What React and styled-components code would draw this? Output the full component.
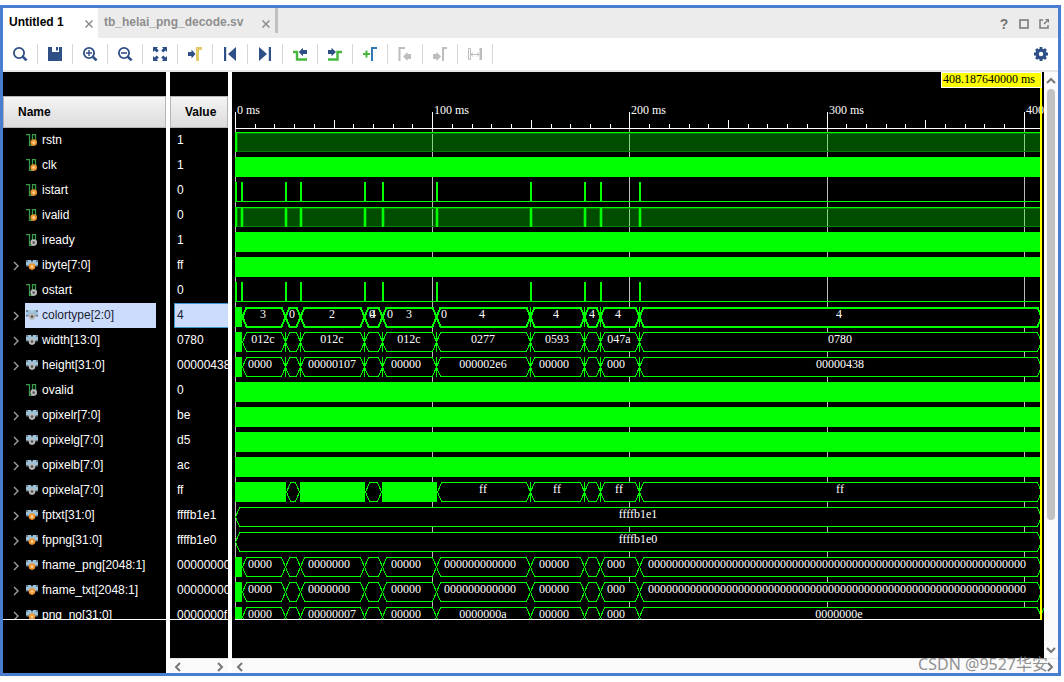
import React from "react";
import styled, { createGlobalStyle, css } from "styled-components";

const GlobalStyle = createGlobalStyle`
  *, *::before, *::after { box-sizing: border-box; }
  body {
    margin: 0;
    background: #fff;
    font-family: "Liberation Sans", Arial, sans-serif;
    font-size: 12px;
  }
  button { font: inherit; }
`;

const NAVY = "#2f4f87";
const GREEN = "#00ff00";
const TOOL_GREEN = "#44b73c";
const MUTED = "#bdbdbd";

/* ---------- frame ---------- */

const Frame = styled.div`
  display: flex;
  flex-direction: column;
  min-height: calc(100vh - 11px);
  margin: 5px 3px 6px 0;
  border: 3px solid #4a7dcf;
  background: #fff;
`;

const bareButton = css`
  display: flex;
  align-items: center;
  justify-content: center;
  padding: 0;
  border: 0;
  background: none;
  cursor: pointer;
`;

const TabBar = styled.div`
  display: flex;
  height: 30px;
  background: #ececec;
`;

const Tab = styled.div`
  display: flex;
  align-items: center;
  justify-content: space-between;
  width: ${(p) => p.$width}px;
  padding: 0 4px 2px 6px;
  background: ${(p) => (p.$active ? "#fff" : "transparent")};
`;

const TabLabel = styled.button`
  ${bareButton}
  font-weight: bold;
  color: ${(p) => (p.$active ? "#000" : "#8e8e8e")};
`;

const CloseButton = styled.button`
  ${bareButton}
  align-self: flex-end;
  width: 10px;
  height: 24px;
`;

const TabDivider = styled.div`
  width: 3px;
  height: 25px;
  background: #c0c0c0;
`;

const WindowActions = styled.div`
  display: flex;
  align-items: center;
  gap: 8px;
  margin-left: auto;
  padding: 2px 8px 0 0;
`;

const WindowButton = styled.button`
  ${bareButton}
  width: 12px;
  height: 16px;
  font-size: 14px;
  font-weight: bold;
  color: #757575;
`;

const Toolbar = styled.div`
  display: flex;
  align-items: center;
  height: 34px;
  border-bottom: 2px solid #e6e6e6;
`;

const ToolButton = styled.button`
  ${bareButton}
  width: 35px;
  height: 20px;
  border-right: 1px solid #d6d6d6;
`;

const SettingsButton = styled.button`
  ${bareButton}
  width: 34px;
  height: 20px;
  margin-left: auto;
`;

const Main = styled.div`
  display: flex;
  flex: 1;
`;

/* ---------- signal table ---------- */

const SignalPane = styled.div`
  display: flex;
  flex-direction: column;
  width: 225px;
  flex: none;
  padding-top: 24px;
  background: linear-gradient(to right, #000 163px, #fff 163px, #fff 167px, #000 167px);
`;

const SignalClip = styled.div`
  height: 524px;
  overflow: hidden;
  border-bottom: 1px solid #fff;
`;

const SignalTable = styled.table`
  width: 100%;
  table-layout: fixed;
  border-collapse: collapse;
  color: #fff;
`;

const HeadCell = styled.th`
  width: ${(p) => p.$width}px;
  padding: 0 ${(p) => (p.$gap ? 4 : 0)}px 0 0;
  text-align: left;
`;

const HeadLabel = styled.div`
  height: 32px;
  padding-left: 14px;
  border: 1px solid #b5b5b5;
  background: linear-gradient(#f4f4f4, #dcdcdc);
  line-height: 30px;
  color: #000;
`;

const BodyCell = styled.td`
  height: 25px;
  padding: 0 0 0 ${(p) => (p.$value ? 4 : 5)}px;
`;

const NameLine = styled.div`
  display: flex;
  align-items: center;
  height: 25px;
`;

const Expander = styled.button`
  ${bareButton}
  width: 17px;
  height: 25px;
  padding-right: 2px;
`;

const ExpanderSpace = styled.span`
  width: 17px;
`;

const NameLabel = styled.span`
  display: flex;
  align-items: center;
  gap: 4px;
  width: 131px;
  height: 25px;
  padding: 0 0 2px 1px;
  background: ${(p) => (p.$selected ? "#cbdcfd" : "transparent")};
  color: ${(p) => (p.$selected ? "#1b2130" : "#fff")};
`;

const ValueLabel = styled.div`
  height: 25px;
  padding-left: 2px;
  overflow: hidden;
  white-space: nowrap;
  line-height: 23px;
  border: 1px solid ${(p) => (p.$selected ? "#3f95cf" : "transparent")};
  border-right: 0;
  background: ${(p) => (p.$selected ? "#cbdcfd" : "transparent")};
  color: ${(p) => (p.$selected ? "#1b2130" : "#fff")};
`;

const SideFooter = styled.div`
  margin-top: auto;
  padding-left: 167px;
`;

/* ---------- scroll bars ---------- */

const HScroll = styled.div`
  display: flex;
  align-items: flex-end;
  justify-content: space-between;
  height: 15px;
  border-top: 1px solid #e6e6e6;
  background: #fafafa;
`;

const VScroll = styled.div`
  display: flex;
  flex-direction: column;
  align-items: center;
  width: 14px;
  background: #fafafa;
`;

const VTrack = styled.div`
  flex: 1;
  width: 8px;
`;

const VThumb = styled.div`
  height: 78%;
  border-radius: 4px;
  background: #c1c1c1;
`;

const ScrollButton = styled.button`
  ${bareButton}
  width: ${(p) => (p.$tall ? 14 : 16)}px;
  height: ${(p) => (p.$tall ? 17 : 12)}px;
`;

/* ---------- wave pane ---------- */

const WavePane = styled.div`
  display: flex;
  flex-direction: column;
  flex: 1;
  min-width: 0;
  margin-left: 4px;
`;

const WaveBody = styled.div`
  display: flex;
  flex: 1;
`;

const WaveCanvas = styled.div`
  flex: 1;
  min-width: 0;
  overflow: hidden;
  background: #000;
`;

const WaveSvg = styled.svg`
  display: block;
  width: 100%;
  height: 548px;
  font-family: "Liberation Serif", "Times New Roman", serif;
  font-size: 12px;
`;

const Watermark = styled.div`
  position: absolute;
  right: 16px;
  bottom: 7px;
  font-family: "Noto Sans", "Noto Sans CJK SC", sans-serif;
  font-size: 16px;
  line-height: 22px;
  color: rgba(130, 130, 130, 0.9);
  pointer-events: none;
`;

/* ---------- icons ---------- */

const Glyph = ({ children }) => (
  <svg width="16" height="16" viewBox="0 0 16 16" fill="none" aria-hidden="true">
    {children}
  </svg>
);

const Lens = ({ children }) => (
  <Glyph>
    <circle cx="7" cy="7" r="5.1" stroke={NAVY} strokeWidth="1.8" />
    <path d="M10.8 10.8L14.6 14.4" stroke={NAVY} strokeWidth="2.6" />
    {children}
  </Glyph>
);

const TOOLS = [
  { label: "Search", icon: <Lens /> },
  {
    label: "Save",
    icon: (
      <Glyph>
        <path d="M1 1h4v5h7V1h3v14H1z" fill={NAVY} />
        <path d="M9 1h2v3.5H9z" fill={NAVY} />
      </Glyph>
    ),
  },
  {
    label: "Zoom in",
    icon: (
      <Lens>
        <path d="M4 7h6M7 4v6" stroke={NAVY} strokeWidth="1.4" />
      </Lens>
    ),
  },
  {
    label: "Zoom out",
    icon: (
      <Lens>
        <path d="M4 7h6" stroke={NAVY} strokeWidth="1.6" />
      </Lens>
    ),
  },
  {
    label: "Zoom fit",
    icon: (
      <Glyph>
        <path
          d="M1 1h5L4.8 2.4 6.8 4.6 4.8 6.6 2.6 4.6 1 6zM15 1v5l-1.6-1.4L11.2 6.6 9.2 4.6l2-2.2L10 1zM1 15v-5l1.6 1.4L4.8 9.4 6.8 11.4l-2 2.2L6 15zM15 15h-5l1.2-1.4L9.2 11.4 11.2 9.4l2.2 2L15 10z"
          fill={NAVY}
        />
      </Glyph>
    ),
  },
  {
    label: "Go to cursor",
    icon: (
      <Glyph>
        <path d="M1 6h3.5V3.5L8.5 8l-4 4.5V10H1z" fill={NAVY} />
        <path d="M10.5 15V2.5H15" stroke="#e2cb68" strokeWidth="3" />
      </Glyph>
    ),
  },
  {
    label: "Go to start",
    icon: (
      <Glyph>
        <path d="M2 1h2.2v14H2zM14 1v14L6 8z" fill={NAVY} />
      </Glyph>
    ),
  },
  {
    label: "Go to end",
    icon: (
      <Glyph>
        <path d="M11.8 1H14v14h-2.2zM2 1v14l8-7z" fill={NAVY} />
      </Glyph>
    ),
  },
  {
    label: "Previous transition",
    icon: (
      <Glyph>
        <path d="M1 6h4v7.5h10" stroke={TOOL_GREEN} strokeWidth="2.4" />
        <path d="M15 4v4h-4v2.3L6.8 6 11 1.7V4z" fill={NAVY} />
      </Glyph>
    ),
  },
  {
    label: "Next transition",
    icon: (
      <Glyph>
        <path d="M1 13.5h9.5V6H15" stroke={TOOL_GREEN} strokeWidth="2.4" />
        <path d="M1 4v4h3.5v2.3L9 6 4.5 1.7V4z" fill={NAVY} />
      </Glyph>
    ),
  },
  {
    label: "Add marker",
    icon: (
      <Glyph>
        <path d="M1 8h7M4.5 4.5v7" stroke={TOOL_GREEN} strokeWidth="2" />
        <path d="M10 15V2h5" stroke="#2f7ab5" strokeWidth="2" />
      </Glyph>
    ),
  },
  {
    label: "Previous marker",
    icon: (
      <Glyph>
        <path d="M2.5 15V2H8" stroke={MUTED} strokeWidth="2" />
        <path d="M14 8v5h-3.5v2L6 10.5l4.5-4.5v2z" fill={MUTED} />
      </Glyph>
    ),
  },
  {
    label: "Next marker",
    icon: (
      <Glyph>
        <path d="M11 15V2h4" stroke={MUTED} strokeWidth="2" />
        <path d="M1 8v5h3.5v2L9 10.5 4.5 6v2z" fill={MUTED} />
      </Glyph>
    ),
  },
  {
    label: "Swap cursors",
    icon: (
      <Glyph>
        <path d="M1.5 2.5h2v11h-2zM4 8.5h8M6 6.5l-2 2 2 2M10 6.5l2 2-2 2" stroke={MUTED} />
        <path d="M12.5 2h2.5v12h-2.5z" fill={MUTED} />
      </Glyph>
    ),
  },
];

const GearIcon = () => (
  <Glyph>
    <circle cx="8" cy="8" r="3.9" stroke={NAVY} strokeWidth="3.4" />
    {[0, 45, 90, 135].map((a) => (
      <path key={a} d="M8 1v2.6M8 12.4V15" stroke={NAVY} strokeWidth="2.8" transform={`rotate(${a} 8 8)`} />
    ))}
  </Glyph>
);

const CloseIcon = () => (
  <svg width="8" height="8" viewBox="0 0 8 8" aria-hidden="true">
    <path d="M.5 .5l7 7M7.5 .5l-7 7" stroke="#8c8c8c" strokeWidth="1.5" />
  </svg>
);

const CHEVRONS = {
  left: "M7 1L3 5l4 4",
  right: "M3 1l4 4-4 4",
  up: "M1 7l4-4 4 4",
  down: "M1 3l4 4 4-4",
};

const Chevron = ({ dir, color = "#777", weight = 2 }) => (
  <svg width="10" height="10" viewBox="0 0 10 10" fill="none" aria-hidden="true">
    <path d={CHEVRONS[dir]} stroke={color} strokeWidth={weight} />
  </svg>
);

const Badge = ({ cx, cy, input }) => (
  <>
    <circle cx={cx} cy={cy} r="3.3" fill={input ? "#ee9330" : "#b9b9b9"} />
    <circle cx={cx} cy={cy} r="1.3" fill={input ? "#fbd79a" : "#555"} />
  </>
);

const SignalIcon = ({ bus, input }) => (
  <svg width="12" height="12" viewBox="0 0 12 12" fill="none" aria-hidden="true">
    {bus ? (
      <>
        <path d="M0 1h5l1 2 1-2h5v6H9.5L8 8H4L2.5 7H0z" fill="#9cc3da" />
        <path d="M0 1h2v2H0zM10 1h2v2h-2zM0 6h2.5v1.5H0zM9.5 6H12v1.5H9.5z" fill="#6d7b85" />
        <Badge cx="6" cy="7.6" input={input} />
      </>
    ) : (
      <>
        <path d="M0 .7h3.5v10.8h3V.7h3v6" stroke="#3a9c4a" strokeWidth="1.3" />
        <Badge cx="7.7" cy="8.6" input={input} />
      </>
    )}
  </svg>
);

/* ---------- data ---------- */

const EDGES = [10, 53, 68, 132, 150, 204, 298, 352, 368, 407, 809];
const SPIKES = [3, 9, 53, 68, 132, 150, 204, 298, 352, 368, 407];
const WAVE_END = 808;
const PX_PER_100MS = 197.2;
const ZEROS = [
  [28, "0000"],
  [97, "0000000"],
  [174, "00000"],
  [248, "000000000000"],
  [322, "00000"],
  [384, "000"],
  [605, "0".repeat(63)],
];

const SIGNALS = [
  { name: "rstn", value: "1", input: true, wave: "dense" },
  { name: "clk", value: "1", input: true, wave: "solid" },
  { name: "istart", value: "0", input: true, wave: "pulse" },
  { name: "ivalid", value: "0", input: true, wave: "burst" },
  { name: "iready", value: "1", wave: "solid" },
  { name: "ibyte[7:0]", value: "ff", bus: true, input: true, wave: "solid" },
  { name: "ostart", value: "0", wave: "pulse" },
  {
    name: "colortype[2:0]", value: "4", bus: true, selected: true, wave: "bus", bars: EDGES.slice(6, 10),
    labels: [[31, "3"], [60, "0"], [100, "2"], [140, "0"], [141, "4"], [158, "0"], [177, "3"], [212, "0"], [250, "4"], [324, "4"], [360, "4"], [386, "4"], [607, "4"]],
  },
  {
    name: "width[13:0]", value: "0780", bus: true, wave: "bus", bars: EDGES.slice(1, 10),
    labels: [[31, "012c"], [100, "012c"], [177, "012c"], [251, "0277"], [325, "0593"], [387, "047a"], [608, "0780"]],
  },
  {
    name: "height[31:0]", value: "00000438", bus: true, wave: "bus", bars: EDGES.slice(1, 10),
    labels: [[28, "0000"], [100, "00000107"], [174, "00000"], [251, "000002e6"], [322, "00000"], [384, "000"], [608, "00000438"]],
  },
  { name: "ovalid", value: "0", wave: "solid" },
  { name: "opixelr[7:0]", value: "be", bus: true, wave: "solid" },
  { name: "opixelg[7:0]", value: "d5", bus: true, wave: "solid" },
  { name: "opixelb[7:0]", value: "ac", bus: true, wave: "solid" },
  {
    name: "opixela[7:0]", value: "ff", bus: true, wave: "bus", bars: EDGES.slice(6, 10),
    solids: [[3, 54], [68, 133], [150, 205]],
    edges: [[54, 67], [133, 149], [205, 298], [298, 352], [352, 368], [368, 407], [407, 809]],
    labels: [[251, "ff"], [325, "ff"], [387, "ff"], [608, "ff"]],
  },
  { name: "fptxt[31:0]", value: "ffffb1e1", bus: true, input: true, wave: "bus", solids: [], edges: [[3, 809]], labels: [[406, "ffffb1e1"]] },
  { name: "fppng[31:0]", value: "ffffb1e0", bus: true, input: true, wave: "bus", solids: [], edges: [[3, 809]], labels: [[406, "ffffb1e0"]] },
  { name: "fname_png[2048:1]", value: "00000000", bus: true, input: true, wave: "bus", labels: ZEROS },
  { name: "fname_txt[2048:1]", value: "00000000", bus: true, input: true, wave: "bus", labels: ZEROS },
  {
    name: "png_no[31:0]", value: "0000000f", bus: true, input: true, wave: "bus",
    labels: [[28, "0000"], [100, "00000007"], [174, "00000"], [251, "0000000a"], [322, "00000"], [384, "000"], [607, "0000000e"]],
  },
];

const DEFAULT_SPANS = EDGES.slice(0, -1).map((x, i) => [x, EDGES[i + 1]]);

/* ---------- wave drawing ---------- */

function BusWave({ top, signal }) {
  const { edges = DEFAULT_SPANS, solids = [[3, 10]], bars = [], labels, selected } = signal;
  const t = top + 0.5;
  const b = top + 19.5;
  const m = top + 10;
  return (
    <g>
      {edges.map(([x0, x1]) => {
        const l = x0 + 0.5;
        const r = x1 + 0.5;
        return (
          <path
            key={x0}
            d={`M${l} ${m}L${l + 4} ${t}H${r - 4}L${r} ${m}L${r - 4} ${b}H${l + 4}Z`}
            fill="#000"
            stroke={GREEN}
            strokeWidth={selected ? 2 : 1}
          />
        );
      })}
      {bars.map((x) => (
        <rect key={x} x={x} y={top} width="1" height="20" fill={GREEN} />
      ))}
      {solids.map(([x0, x1]) => (
        <rect key={x0} x={x0} y={top} width={x1 - x0} height="20" fill={GREEN} />
      ))}
      {labels.map(([x, text]) => (
        <text key={x} x={x} y={top + 11} textAnchor="middle" fill="#fff">
          {text}
        </text>
      ))}
    </g>
  );
}

function Wave({ signal, top }) {
  const width = WAVE_END - 3;
  if (signal.wave === "solid") return <rect x="3" y={top} width={width} height="20" fill={GREEN} />;
  if (signal.wave === "bus") return <BusWave top={top} signal={signal} />;
  if (signal.wave === "pulse")
    return (
      <g fill={GREEN}>
        <rect x="3" y={top + 19} width={width} height="1" />
        {SPIKES.map((x) => (
          <rect key={x} x={x} y={top} width="2" height="20" />
        ))}
      </g>
    );
  const spikes = signal.wave === "burst" ? SPIKES : [3];
  return (
    <g>
      <rect x="3" y={top} width={width} height="20" fill={GREEN} fillOpacity="0.3" />
      <rect x="3" y={top + 1} width={width} height="1" fill="#008000" />
      <rect x="3" y={top + 19} width={width} height="1" fill="#008000" />
      {spikes.map((x) => (
        <g key={x}>
          <rect x={Math.max(3, x - 1)} y={top} width={x === 3 ? 3 : 4} height="20" fill="#008000" />
          <rect x={x} y={top} width="2" height="20" fill={GREEN} />
        </g>
      ))}
      <rect x="3" y={top} width={width} height="1" fill={GREEN} />
    </g>
  );
}

function Ruler() {
  const ticks = Array.from({ length: 41 }, (_, i) => i);
  return (
    <g fill="#fff">
      <rect x="3" y="56" width={WAVE_END - 3} height="1" />
      {ticks.map((i) => {
        const h = i % 10 === 0 ? 17 : i % 5 === 0 ? 9 : 5;
        return <rect key={i} x={Math.round(3 + (i * PX_PER_100MS) / 10)} y={57 - h} width="1" height={h} />;
      })}
      {["0 ms", "100 ms", "200 ms", "300 ms", "400"].map((label, i) => (
        <text key={label} x={Math.round(3 + i * PX_PER_100MS) + 2} y="42">
          {label}
        </text>
      ))}
    </g>
  );
}

function WaveView() {
  return (
    <WaveSvg role="img" aria-label="Signal waveforms">
      <defs>
        <clipPath id="rows">
          <rect x="0" y="57" width="812" height="490" />
        </clipPath>
      </defs>
      <Ruler />
      <g clipPath="url(#rows)">
        {[0, 1, 2, 3, 4].map((i) => (
          <rect key={i} x={Math.round(3 + i * PX_PER_100MS)} y="57" width="1" height="490" fill="#bdbdbd" />
        ))}
        <g shapeRendering="crispEdges">
          {SIGNALS.map((s, i) => (
            <Wave key={s.name} signal={s} top={60 + 25 * i} />
          ))}
        </g>
        <path d="M805 536L809 543L812 536" stroke={GREEN} fill="none" />
      </g>
      <rect x="3" y="547" width={WAVE_END - 3} height="1" fill="#fff" />
      <rect x="808" y="16" width="2" height="532" fill="#ff0" />
      <rect x="709" y="0" width="101" height="16" fill="#fff" />
      <rect x="710" y="1" width="99" height="14" fill="#ff0" />
      <text x="711" y="11" fill="#000">
        408.187640000 ms
      </text>
    </WaveSvg>
  );
}

/* ---------- page ---------- */

export default function App() {
  return (
    <>
      <GlobalStyle />
      <Frame>
        <TabBar>
          <Tab $active $width={95}>
            <TabLabel $active>Untitled 1</TabLabel>
            <CloseButton aria-label="Close Untitled 1">
              <CloseIcon />
            </CloseButton>
          </Tab>
          <Tab $width={177}>
            <TabLabel>tb_helai_png_decode.sv</TabLabel>
            <CloseButton aria-label="Close tb_helai_png_decode.sv">
              <CloseIcon />
            </CloseButton>
          </Tab>
          <TabDivider />
          <WindowActions>
            <WindowButton aria-label="Help">?</WindowButton>
            <WindowButton aria-label="Maximize">
              <svg width="10" height="10" viewBox="0 0 10 10" fill="none" aria-hidden="true">
                <rect x="1" y="1" width="8" height="8" stroke="#7b7b7b" strokeWidth="1.6" />
              </svg>
            </WindowButton>
            <WindowButton aria-label="Float">
              <svg width="10" height="10" viewBox="0 0 10 10" fill="none" aria-hidden="true">
                <path d="M4 1H1v8h8V6M5 5l3-3" stroke="#7b7b7b" strokeWidth="1.5" />
                <path d="M6 0h4v4z" fill="#7b7b7b" />
              </svg>
            </WindowButton>
          </WindowActions>
        </TabBar>

        <Toolbar>
          {TOOLS.map((t) => (
            <ToolButton key={t.label} aria-label={t.label}>
              {t.icon}
            </ToolButton>
          ))}
          <SettingsButton aria-label="Settings">
            <GearIcon />
          </SettingsButton>
        </Toolbar>

        <Main>
          <SignalPane>
            <SignalClip>
              <SignalTable>
                <thead>
                  <tr>
                    <HeadCell $width={167} $gap>
                      <HeadLabel>Name</HeadLabel>
                    </HeadCell>
                    <HeadCell $width={58}>
                      <HeadLabel>Value</HeadLabel>
                    </HeadCell>
                  </tr>
                </thead>
                <tbody>
                  {SIGNALS.map((s) => (
                    <tr key={s.name}>
                      <BodyCell>
                        <NameLine>
                          {s.bus ? (
                            <Expander aria-label={`Expand ${s.name}`}>
                              <Chevron dir="right" color="#a0a0a0" weight={1.4} />
                            </Expander>
                          ) : (
                            <ExpanderSpace />
                          )}
                          <NameLabel $selected={s.selected}>
                            <SignalIcon bus={s.bus} input={s.input} />
                            {s.name}
                          </NameLabel>
                        </NameLine>
                      </BodyCell>
                      <BodyCell $value>
                        <ValueLabel $selected={s.selected}>{s.value}</ValueLabel>
                      </BodyCell>
                    </tr>
                  ))}
                </tbody>
              </SignalTable>
            </SignalClip>
            <SideFooter>
              <HScroll>
                <ScrollButton aria-label="Scroll values left">
                  <Chevron dir="left" />
                </ScrollButton>
                <ScrollButton aria-label="Scroll values right">
                  <Chevron dir="right" />
                </ScrollButton>
              </HScroll>
            </SideFooter>
          </SignalPane>

          <WavePane>
            <WaveBody>
              <WaveCanvas>
                <WaveView />
              </WaveCanvas>
              <VScroll>
                <ScrollButton $tall aria-label="Scroll up">
                  <Chevron dir="up" />
                </ScrollButton>
                <VTrack>
                  <VThumb />
                </VTrack>
                <ScrollButton $tall aria-label="Scroll down">
                  <Chevron dir="down" />
                </ScrollButton>
              </VScroll>
            </WaveBody>
            <HScroll>
              <ScrollButton aria-label="Scroll waves left">
                <Chevron dir="left" />
              </ScrollButton>
              <ScrollButton aria-label="Scroll waves right">
                <Chevron dir="right" />
              </ScrollButton>
            </HScroll>
          </WavePane>
        </Main>
      </Frame>
      <Watermark>CSDN @9527华安</Watermark>
    </>
  );
}
